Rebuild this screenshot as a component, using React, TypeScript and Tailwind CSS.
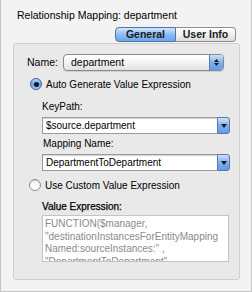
import React from "react";

type ComboProps = {
  value: string;
};

// campo de texto com botão de lista à direita (estilo Aqua)
function Combo({ value }: ComboProps) {
  return (
    <div className="flex h-[17px] w-[188px]">
      <div className="flex flex-1 items-center border border-r-0 border-[#9a9a9a] bg-white pl-[3px] text-[10px] text-black shadow-[inset_0_1px_1px_rgba(0,0,0,0.18)]">
        {value}
      </div>
      <div className="flex w-[13px] items-center justify-center rounded-r-[3px] border border-[#5a78a8] bg-gradient-to-b from-[#cfe2fb] via-[#7fb0ee] to-[#5d9ae6]">
        <svg width="6" height="4" viewBox="0 0 6 4">
          <path d="M0 0h6L3 4z" fill="#1a1a1a" />
        </svg>
      </div>
    </div>
  );
}

function Radio({ checked }: { checked: boolean }) {
  if (checked) {
    return (
      <div className="flex h-[12px] w-[12px] items-center justify-center rounded-full border border-[#3f5f94] bg-gradient-to-b from-[#b9d5f7] via-[#6ea3e9] to-[#a9cdf6]">
        <div className="h-[5px] w-[5px] rounded-full bg-[#10182a]" />
      </div>
    );
  }
  return (
    <div className="h-[12px] w-[12px] rounded-full border border-[#8f8f8f] bg-gradient-to-b from-[#f4f4f4] to-white shadow-[inset_0_1px_1px_rgba(0,0,0,0.15)]" />
  );
}

export default function App() {
  const expressao = [
    "FUNCTION($manager,",
    "\"destinationInstancesForEntityMapping",
    "Named:sourceInstances:\" ,",
    "\"DepartmentToDepartment\"",
  ];

  return (
    <div
      className="h-[292px] w-[252px] overflow-hidden border-x border-b border-[#c6c6c6] bg-[#f3f3f3] text-black"
      style={{ fontFamily: '"Liberation Sans", Arial, sans-serif' }}
    >
      <div className="pl-[16px] pt-[9px] text-[10.5px] leading-[13px]">
        Relationship Mapping: department
      </div>

      {/* abas */}
      <div className="mt-[5px] flex h-[15px] pl-[114px]">
        <div className="flex w-[61px] items-center justify-center rounded-l-[4px] border border-[#55739f] bg-gradient-to-b from-[#d3e6fc] via-[#8dbcf3] to-[#6aa6ee] text-[10.5px] font-bold leading-none text-[#1a1a1a]">
          General
        </div>
        <div className="flex w-[60px] items-center justify-center rounded-r-[4px] border border-l-0 border-[#8e8e8e] bg-gradient-to-b from-white via-[#f0f0f0] to-[#dcdcdc] text-[10.5px] font-bold leading-none text-[#1a1a1a]">
          User Info
        </div>
      </div>

      <div className="ml-[12px] mt-[1px] h-[237px] w-[227px] rounded-[3px] border border-[#cfcfcf] bg-[#e9e9e9] pt-[10px]">
        {/* Name */}
        <div className="flex h-[17px] items-center pl-[13px]">
          <span className="w-[36px] text-[10.5px]">Name:</span>
          <div className="flex h-[17px] w-[161px] items-center rounded-[4px] border border-[#8b8b8b] bg-gradient-to-b from-white via-[#f3f3f3] to-[#e1e1e1] shadow-[0_1px_1px_rgba(0,0,0,0.12)]">
            <span className="flex-1 pl-[7px] text-[10.5px]">department</span>
            <div className="flex h-full w-[14px] flex-col items-center justify-center gap-[1px] rounded-r-[3px] border-l border-[#5a78a8] bg-gradient-to-b from-[#cfe2fb] via-[#7fb0ee] to-[#5d9ae6]">
              <svg width="5" height="3" viewBox="0 0 5 3">
                <path d="M0 3h5L2.5 0z" fill="#1a1a1a" />
              </svg>
              <svg width="5" height="3" viewBox="0 0 5 3">
                <path d="M0 0h5L2.5 3z" fill="#1a1a1a" />
              </svg>
            </div>
          </div>
        </div>

        {/* Auto */}
        <div className="mt-[6px] flex h-[14px] items-center gap-[4px] pl-[16px]">
          <Radio checked />
          <span className="text-[10px]">Auto Generate Value Expression</span>
        </div>

        <div className="pl-[28px]">
          <div className="mt-[9px] text-[10px] leading-[13px]">KeyPath:</div>
          <div className="mt-[4px]">
            <Combo value="$source.department" />
          </div>
          <div className="mt-[3px] pl-[1px] text-[10px] leading-[13px]">Mapping Name:</div>
          <div className="mt-[4px]">
            <Combo value="DepartmentToDepartment" />
          </div>
        </div>

        {/* Custom */}
        <div className="mt-[7px] flex h-[14px] items-center gap-[4px] pl-[15px]">
          <Radio checked={false} />
          <span className="text-[10px]">Use Custom Value Expression</span>
        </div>

        <div className="pl-[28px]">
          <div className="mt-[8px] text-[10px] leading-[13px] [-webkit-text-stroke:0.25px_#000]">
            Value Expression:
          </div>
          <div className="mt-[2px] h-[47px] w-[187px] overflow-hidden border border-[#c4c4c4] bg-white pl-[2px] pt-[2px] text-[10px] leading-[12.5px] text-[#8a8a8a]">
            {expressao.map((linha, i) => (
              <div key={i} className="whitespace-nowrap">
                {linha}
              </div>
            ))}
          </div>
        </div>
      </div>
    </div>
  );
}
